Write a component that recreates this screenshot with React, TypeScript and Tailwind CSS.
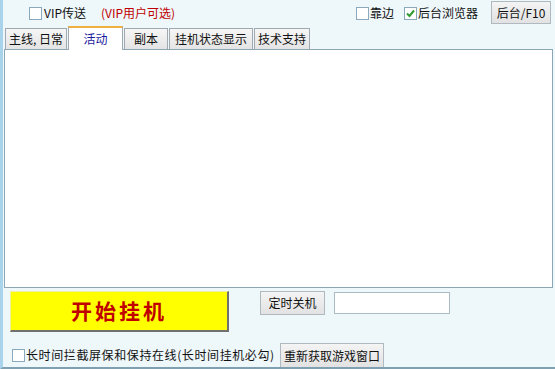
import { useState } from 'react';

const Box = ({ checked = false }: { checked?: boolean }) => (
  <span className="w-[13px] h-[13px] border border-[#8aa9bd] bg-white flex items-center justify-center shrink-0">
    {checked && (
      <svg viewBox="0 0 11 11" className="w-[11px] h-[11px]">
        <path d="M2 5.5 L4.5 8 L9 2.5" fill="none" stroke="#2f9a2f" strokeWidth="2" />
      </svg>
    )}
  </span>
);

const tabs = ['主线, 日常', '活动', '副本', '挂机状态显示', '技术支持'];
const tabW = ['w-[62px]', 'w-[55px]', 'w-[44px]', 'w-[84px]', 'w-[56px]'];

const App = () => {
  const [active, setActive] = useState(1);

  return (
    <div
      className="w-[555px] h-[369px] bg-[#eef7fa] border-l-[3px] border-l-[#a9d3ea] border-b-2 border-b-[#7fa0b0] flex flex-col text-[12px] text-[#111] overflow-hidden"
      style={{ fontFamily: '"Noto Sans CJK SC", "Noto Sans", sans-serif' }}
    >
      {/* top row */}
      <div className="h-[28px] flex items-center pl-[26px] pr-[4px]">
        <Box />
        <span className="ml-[2px]">VIP传送</span>
        <span className="ml-[15px] text-[#c00000]">(VIP用户可选)</span>
        <div className="ml-auto flex items-center">
          <Box />
          <span className="ml-[1px]">靠边</span>
          <span className="ml-[10px]"><Box checked /></span>
          <span className="ml-[1px]">后台浏览器</span>
          <button className="ml-[13px] h-[23px] w-[60px] border border-[#b0b8c0] bg-gradient-to-b from-[#f4f4f4] to-[#e2e2e2] mb-[1px]">
            后台/F10
          </button>
        </div>
      </div>

      {/* tabs */}
      <div className="flex items-end pl-[2px] gap-[1px] h-[23px]">
        {tabs.map((t, i) =>
          i === active ? (
            <div
              key={t}
              onClick={() => setActive(i)}
              className={`${tabW[i]} h-[24px] -mb-px z-10 bg-white border border-[#a0a8b0] border-b-0 border-t-2 border-t-[#f0b040] flex items-center justify-center text-[#1a1aa0]`}
            >
              {t}
            </div>
          ) : (
            <div
              key={t}
              onClick={() => setActive(i)}
              className={`${tabW[i]} h-[21px] bg-gradient-to-b from-[#f6f6f6] to-[#e4e4e4] border border-[#a0a8b0] border-b-0 flex items-center justify-center`}
            >
              {t}
            </div>
          )
        )}
      </div>

      {/* content panel */}
      <div className="ml-[1px] mr-[2px] h-[239px] bg-white border border-[#8ca6b4] shrink-0" />

      {/* controls */}
      <div className="flex items-start pt-[3px] pl-[7px]">
        <button className="w-[219px] h-[41px] bg-[#ffff00] border-t border-l border-[#f0f0a0] border-r-2 border-b-2 border-r-[#707070] border-b-[#707070] text-[#c00000] text-[21px] font-bold tracking-[3px] flex items-center justify-center">
          开始挂机
        </button>
        <button className="ml-[31px] h-[24px] w-[65px] border border-[#b0b8c0] bg-gradient-to-b from-[#f4f4f4] to-[#e2e2e2]">
          定时关机
        </button>
        <div className="ml-[9px] mt-[1px] w-[116px] h-[22px] bg-white border border-[#a8bcc8]" />
      </div>

      <div className="flex items-center mt-[11px] pl-[9px]">
        <Box />
        <span className="ml-[1px] w-[249px] tracking-[0.6px] whitespace-nowrap">长时间拦截屏保和保持在线(长时间挂机必勾)</span>
        <button className="ml-[5px] h-[24px] w-[104px] border border-[#b0b8c0] border-b-0 bg-gradient-to-b from-[#f4f4f4] to-[#e2e2e2]">
          重新获取游戏窗口
        </button>
      </div>
    </div>
  );
};

export default App;
